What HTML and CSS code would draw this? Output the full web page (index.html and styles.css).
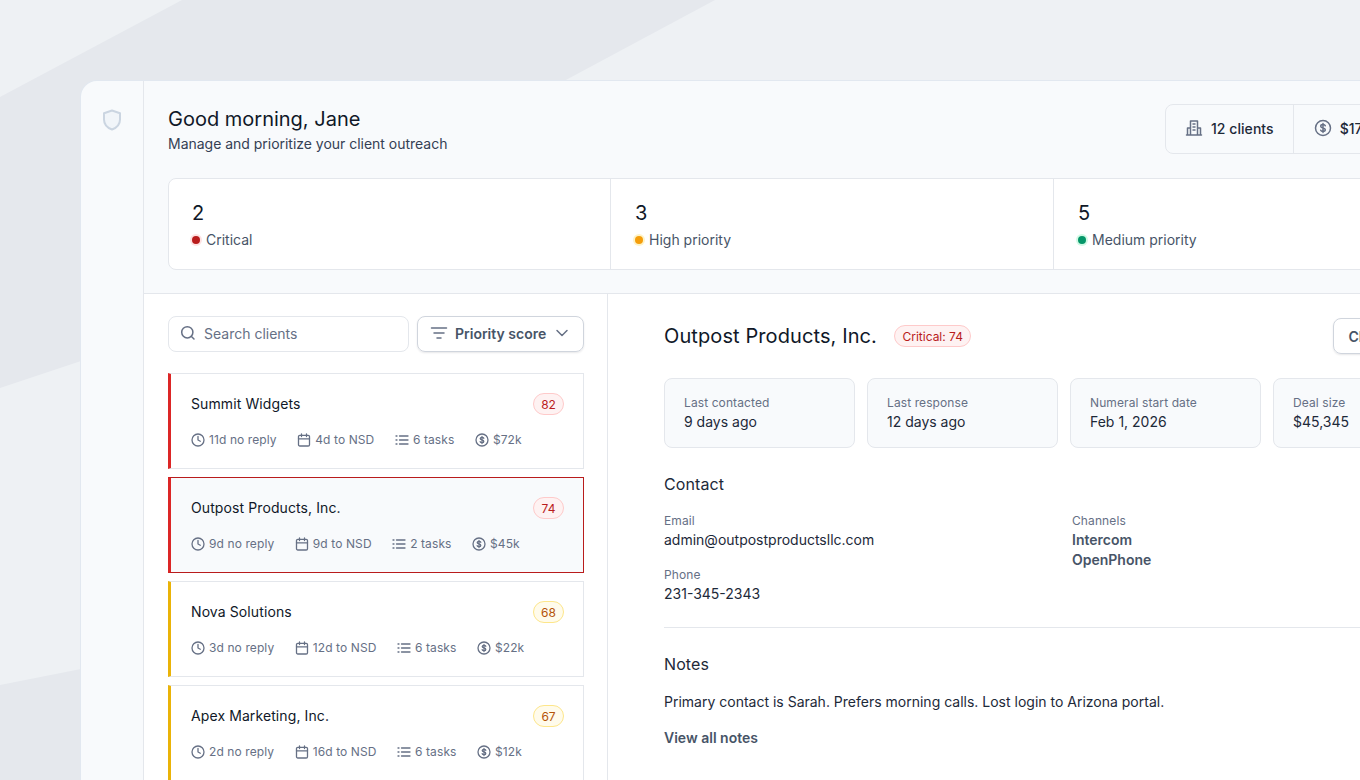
FILE: index.html
```html
<!DOCTYPE html>
<html>

<head>
    <link rel="stylesheet" href="styles.css">
</head>

<body>

    <svg class="backdrop" width="1360" height="780" viewBox="0 0 1360 780">
        <polygon points="182,0 715,0 564,81 81,361 0,388 0,97" />
        <polygon points="0,685 81,669 81,780 0,780" />
    </svg>

    <div class="app">
        <div class="sidebar">
            <svg class="shield" width="24" height="24" viewBox="0 0 24 24">
                <path d="M12 2.500l8 2.800v6.200c0 5-3.300 8.300-8 10-4.700-1.700-8-5-8-10V5.300z" />
            </svg>
        </div>

        <div class="main">
            <div class="top">
                <div class="top-row">
                    <div class="intro">
                        <h1 class="greeting">Good morning, Jane</h1>
                        <p class="subtitle">Manage and prioritize your client outreach</p>
                    </div>
                    <div class="totals">
                        <div class="total">
                            <svg class="icon-18" viewBox="0 0 18 18"><path d="M1.500 16h15M2.500 16V9h3M15.500 16V9h-3M5.500 16V2h7v14M8 5h2M8 8h2M8 11h2" /></svg>
                            12 clients
                        </div>
                        <div class="total">
                            <svg class="icon-18" viewBox="0 0 18 18"><circle cx="9" cy="9" r="7.500" /><path d="M11.300 6.800C11 6 10.100 5.500 9 5.500c-1.300 0-2.300.7-2.300 1.700 0 2.300 4.600 1.200 4.600 3.600 0 1-1 1.700-2.300 1.700-1.100 0-2-.5-2.300-1.300M9 4.500v9" /></svg>
                            $172k
                        </div>
                    </div>
                </div>

                <div class="stats">
                    <div class="stat">
                        <div class="stat-num">2</div>
                        <div class="stat-label"><span class="dot dot-red"></span>Critical</div>
                    </div>
                    <div class="stat">
                        <div class="stat-num">3</div>
                        <div class="stat-label"><span class="dot dot-orange"></span>High priority</div>
                    </div>
                    <div class="stat">
                        <div class="stat-num">5</div>
                        <div class="stat-label"><span class="dot dot-green"></span>Medium priority</div>
                    </div>
                </div>
            </div>

            <div class="split">
                <div class="list-panel">
                    <div class="tools">
                        <div class="search">
                            <svg class="icon-16" viewBox="0 0 16 16"><circle cx="7.300" cy="7.300" r="5.600" /><path d="M14 14l-2.800-2.800" /></svg>
                            Search clients
                        </div>
                        <div class="sort">
                            <svg class="icon-18" viewBox="0 0 18 18"><path d="M1.500 4h15M4 9h10M7 14h4" /></svg>
                            <span class="sort-text">Priority score</span>
                            <svg class="icon-18 chevron" viewBox="0 0 18 18"><path d="M4 6.500l5 5 5-5" /></svg>
                        </div>
                    </div>

                    <div class="client client-red">
                        <div class="client-head">
                            <span class="client-name">Summit Widgets</span>
                            <span class="score score-red">82</span>
                        </div>
                        <div class="client-meta">
                            <span class="meta"><svg class="icon-14" viewBox="0 0 14 14"><circle cx="7" cy="7" r="6" /><path d="M7 3.500V7l2.300 1.300" /></svg>11d no reply</span>
                            <span class="meta"><svg class="icon-14" viewBox="0 0 14 14"><rect x="1.500" y="2.300" width="11" height="10.700" rx="1.300" /><path d="M1.500 5.800h11M4.500 1v2.500M9.500 1v2.500" /></svg>4d to NSD</span>
                            <span class="meta"><svg class="icon-14" viewBox="0 0 14 14"><path d="M4.500 3h8.500M4.500 7h8.500M4.500 11h8.500M1 3h1M1 7h1M1 11h1" /></svg>6 tasks</span>
                            <span class="meta"><svg class="icon-14" viewBox="0 0 14 14"><circle cx="7" cy="7" r="6" /><path d="M8.800 5.300C8.600 4.700 7.900 4.300 7 4.300c-1 0-1.800.5-1.800 1.300 0 1.800 3.600.9 3.600 2.800 0 .8-.8 1.300-1.800 1.300-.9 0-1.600-.4-1.800-1M7 3.500v7" /></svg>$72k</span>
                        </div>
                    </div>

                    <div class="client client-red client-active">
                        <div class="client-head">
                            <span class="client-name">Outpost Products, Inc.</span>
                            <span class="score score-red">74</span>
                        </div>
                        <div class="client-meta">
                            <span class="meta"><svg class="icon-14" viewBox="0 0 14 14"><circle cx="7" cy="7" r="6" /><path d="M7 3.500V7l2.300 1.300" /></svg>9d no reply</span>
                            <span class="meta"><svg class="icon-14" viewBox="0 0 14 14"><rect x="1.500" y="2.300" width="11" height="10.700" rx="1.300" /><path d="M1.500 5.800h11M4.500 1v2.500M9.500 1v2.500" /></svg>9d to NSD</span>
                            <span class="meta"><svg class="icon-14" viewBox="0 0 14 14"><path d="M4.500 3h8.500M4.500 7h8.500M4.500 11h8.500M1 3h1M1 7h1M1 11h1" /></svg>2 tasks</span>
                            <span class="meta"><svg class="icon-14" viewBox="0 0 14 14"><circle cx="7" cy="7" r="6" /><path d="M8.800 5.300C8.600 4.700 7.900 4.300 7 4.300c-1 0-1.800.5-1.800 1.300 0 1.800 3.600.9 3.600 2.800 0 .8-.8 1.300-1.800 1.300-.9 0-1.600-.4-1.800-1M7 3.500v7" /></svg>$45k</span>
                        </div>
                    </div>

                    <div class="client client-amber">
                        <div class="client-head">
                            <span class="client-name">Nova Solutions</span>
                            <span class="score score-amber">68</span>
                        </div>
                        <div class="client-meta">
                            <span class="meta"><svg class="icon-14" viewBox="0 0 14 14"><circle cx="7" cy="7" r="6" /><path d="M7 3.500V7l2.300 1.300" /></svg>3d no reply</span>
                            <span class="meta"><svg class="icon-14" viewBox="0 0 14 14"><rect x="1.500" y="2.300" width="11" height="10.700" rx="1.300" /><path d="M1.500 5.800h11M4.500 1v2.500M9.500 1v2.500" /></svg>12d to NSD</span>
                            <span class="meta"><svg class="icon-14" viewBox="0 0 14 14"><path d="M4.500 3h8.500M4.500 7h8.500M4.500 11h8.500M1 3h1M1 7h1M1 11h1" /></svg>6 tasks</span>
                            <span class="meta"><svg class="icon-14" viewBox="0 0 14 14"><circle cx="7" cy="7" r="6" /><path d="M8.800 5.300C8.600 4.700 7.900 4.300 7 4.300c-1 0-1.800.5-1.800 1.300 0 1.800 3.600.9 3.600 2.800 0 .8-.8 1.300-1.800 1.300-.9 0-1.600-.4-1.800-1M7 3.500v7" /></svg>$22k</span>
                        </div>
                    </div>

                    <div class="client client-amber">
                        <div class="client-head">
                            <span class="client-name">Apex Marketing, Inc.</span>
                            <span class="score score-amber">67</span>
                        </div>
                        <div class="client-meta">
                            <span class="meta"><svg class="icon-14" viewBox="0 0 14 14"><circle cx="7" cy="7" r="6" /><path d="M7 3.500V7l2.300 1.300" /></svg>2d no reply</span>
                            <span class="meta"><svg class="icon-14" viewBox="0 0 14 14"><rect x="1.500" y="2.300" width="11" height="10.700" rx="1.300" /><path d="M1.500 5.800h11M4.500 1v2.500M9.500 1v2.500" /></svg>16d to NSD</span>
                            <span class="meta"><svg class="icon-14" viewBox="0 0 14 14"><path d="M4.500 3h8.500M4.500 7h8.500M4.500 11h8.500M1 3h1M1 7h1M1 11h1" /></svg>6 tasks</span>
                            <span class="meta"><svg class="icon-14" viewBox="0 0 14 14"><circle cx="7" cy="7" r="6" /><path d="M8.800 5.300C8.600 4.700 7.900 4.300 7 4.300c-1 0-1.800.5-1.800 1.300 0 1.800 3.600.9 3.600 2.800 0 .8-.8 1.300-1.800 1.300-.9 0-1.600-.4-1.800-1M7 3.500v7" /></svg>$12k</span>
                        </div>
                    </div>
                </div>

                <div class="detail">
                    <div class="detail-head">
                        <h2 class="detail-title">Outpost Products, Inc.</h2>
                        <span class="tag">Critical: 74</span>
                        <div class="detail-btn">Close</div>
                    </div>

                    <div class="facts">
                        <div class="fact"><div class="fact-label">Last contacted</div><div class="fact-value">9 days ago</div></div>
                        <div class="fact"><div class="fact-label">Last response</div><div class="fact-value">12 days ago</div></div>
                        <div class="fact"><div class="fact-label">Numeral start date</div><div class="fact-value">Feb 1, 2026</div></div>
                        <div class="fact"><div class="fact-label">Deal size</div><div class="fact-value">$45,345</div></div>
                    </div>

                    <h3 class="section-title">Contact</h3>
                    <div class="contact">
                        <div>
                            <div class="field">
                                <div class="field-label">Email</div>
                                <div class="field-value">admin@outpostproductsllc.com</div>
                            </div>
                            <div class="field">
                                <div class="field-label">Phone</div>
                                <div class="field-value">231-345-2343</div>
                            </div>
                        </div>
                        <div class="field">
                            <div class="field-label">Channels</div>
                            <div class="field-strong">Intercom</div>
                            <div class="field-strong">OpenPhone</div>
                        </div>
                    </div>

                    <div class="rule"></div>

                    <h3 class="section-title">Notes</h3>
                    <p class="note">Primary contact is Sarah. Prefers morning calls. Lost login to Arizona portal.</p>
                    <div class="more">View all notes</div>
                </div>
            </div>
        </div>
    </div>

</body>

</html>
```

FILE: styles.css
```css
html, body {
    height: 100%;
}

body {
    margin: 0;
    background-color: #eef1f4;
    font-family: Inter, "Liberation Sans", sans-serif;
    color: #101828;
    overflow: hidden;
}

.backdrop {
    position: absolute;
    top: 0;
    left: 0;
}

.backdrop polygon {
    fill: #e5e8ed;
    stroke: none;
}

h1, h2, h3, p {
    margin: 0;
    font-weight: 400;
}

svg {
    flex: none;
    fill: none;
    stroke: #667085;
    stroke-width: 1.5;
    stroke-linecap: round;
    stroke-linejoin: round;
}

.shield {
    fill: #f1f5f9;
    stroke: #cbd5e1;
    stroke-width: 2;
}

.icon-14 { width: 14px; height: 14px; stroke-width: 1.3; }
.icon-16 { width: 16px; height: 16px; }
.icon-18 { width: 18px; height: 18px; }

.app {
    position: absolute;
    top: 81px;
    left: 81px;
    width: 1279px;
    height: 699px;
    display: flex;
    background-color: #f8fafc;
    border-radius: 16px 0 0 0;
    box-shadow: 0 0 0 1px #e2e8f0;
    overflow: hidden;
}

.sidebar {
    width: 63px;
    flex: none;
    box-sizing: border-box;
    padding-top: 27px;
    display: flex;
    justify-content: center;
    align-items: flex-start;
    border-right: 1px solid #e4e7ec;
}

.main {
    width: 1375px;
    flex: none;
    display: flex;
    flex-direction: column;
}

.top {
    height: 213px;
    flex: none;
    box-sizing: border-box;
    padding: 24px 24px 0;
    border-bottom: 1px solid #e4e7ec;
}

.top-row {
    display: flex;
    height: 73px;
}

.intro {
    width: 997px;
    flex: none;
}

.greeting {
    font-size: 20px;
    line-height: 28px;
}

.subtitle {
    font-size: 14px;
    line-height: 20px;
    font-weight: 400;
    letter-spacing: -0.02px;
    color: #344054;
    margin-top: 1px;
}

.totals {
    display: flex;
    height: 50px;
    box-sizing: border-box;
    margin-top: -1px;
    border: 1px solid #e4e7ec;
    border-radius: 8px;
}

.total {
    display: flex;
    align-items: center;
    gap: 8px;
    padding: 0 19px 2px;
    font-size: 14px;
    font-weight: 500;
    letter-spacing: 0.05px;
    color: #1d2939;
}

.total + .total {
    padding-left: 20px;
    border-left: 1px solid #e4e7ec;
}

.stats {
    display: grid;
    grid-template-columns: 441px 443px 1fr;
    height: 92px;
    box-sizing: border-box;
    background-color: #ffffff;
    border: 1px solid #e4e7ec;
    border-radius: 8px;
}

.stat {
    padding: 21px 23px 0;
}

.stat + .stat {
    padding-left: 24px;
    border-left: 1px solid #e4e7ec;
}

.stat-num {
    font-size: 20px;
    line-height: 26px;
}

.stat-label {
    display: flex;
    align-items: center;
    gap: 6px;
    font-size: 14px;
    line-height: 20px;
    color: #475467;
    margin-top: 4px;
}

.dot {
    width: 8px;
    height: 8px;
    border-radius: 50%;
}

.dot-red { background-color: #b91c1c; box-shadow: 0 0 0 2px #fee2e2; }
.dot-orange { background-color: #f59e0b; box-shadow: 0 0 0 2px #fef3c7; }
.dot-green { background-color: #059669; box-shadow: 0 0 0 2px #d1fae5; }

.split {
    flex: 1;
    display: flex;
    background-color: #ffffff;
}

.list-panel {
    width: 464px;
    flex: none;
    box-sizing: border-box;
    padding: 22px 23px 0 24px;
    border-right: 1px solid #e4e7ec;
}

.tools {
    display: flex;
    gap: 8px;
    margin-bottom: 21px;
}

.search {
    flex: 1;
    height: 36px;
    box-sizing: border-box;
    display: flex;
    align-items: center;
    gap: 8px;
    padding: 0 11px 2px;
    font-size: 14px;
    color: #667085;
    border: 1px solid #e4e7ec;
    border-radius: 8px;
}

.sort {
    width: 167px;
    height: 36px;
    flex: none;
    box-sizing: border-box;
    display: flex;
    align-items: center;
    gap: 7px;
    padding: 0 12px 2px;
    font-size: 14px;
    font-weight: 600;
    color: #475467;
    border: 1px solid #d0d5dd;
    border-radius: 8px;
    box-shadow: 0 1px 2px rgba(16, 24, 40, 0.1);
}

.sort-text {
    white-space: nowrap;
}

.chevron {
    margin-left: auto;
}

.client {
    height: 96px;
    box-sizing: border-box;
    margin-bottom: 8px;
    padding: 19px 19px 0 20px;
    border: 1px solid #e4e7ec;
    border-left: 3px solid;
}

.client-red { border-left-color: #dc2626; }
.client-amber { border-left-color: #eab308; }

.client-active {
    background-color: #f8fafc;
    border-color: #b91c1c;
    border-left-color: #dc2626;
}

.client-head {
    display: flex;
    justify-content: space-between;
    align-items: center;
    height: 22px;
}

.client-name {
    font-size: 14px;
    font-weight: 400;
    letter-spacing: 0.1px;
    color: #101828;
    margin-top: -2px;
}

.score {
    height: 22px;
    min-width: 31px;
    box-sizing: border-box;
    display: flex;
    align-items: center;
    justify-content: center;
    padding: 0 6px;
    font-size: 12px;
    border-radius: 11px;
}

.score-red { color: #b91c1c; background-color: #fef2f2; border: 1px solid #fecaca; }
.score-amber { color: #b45309; background-color: #fffbeb; border: 1px solid #fde68a; }

.client-meta {
    display: flex;
    gap: 20.5px;
    margin-top: 17px;
}

.meta {
    display: flex;
    align-items: center;
    gap: 4px;
    font-size: 12px;
    line-height: 16px;
    letter-spacing: 0.1px;
    color: #667085;
}

.detail {
    flex: 1;
    min-width: 0;
    padding: 23px 56px 0;
}

.detail-head {
    display: flex;
    align-items: center;
    gap: 17px;
    height: 38px;
    margin-bottom: 23px;
}

.detail-title {
    font-size: 20px;
    letter-spacing: 0.1px;
    white-space: nowrap;
}

.tag {
    height: 22px;
    box-sizing: border-box;
    display: flex;
    align-items: center;
    padding: 0 7.5px;
    font-size: 12px;
    color: #b91c1c;
    background-color: #fef2f2;
    border: 1px solid #fecaca;
    border-radius: 11px;
}

.detail-btn {
    margin-left: 345px;
    height: 36px;
    flex: none;
    box-sizing: border-box;
    display: flex;
    align-items: center;
    padding: 0 14px;
    font-size: 14px;
    font-weight: 600;
    color: #475467;
    border: 1px solid #d0d5dd;
    border-radius: 8px;
    box-shadow: 0 1px 2px rgba(16, 24, 40, 0.1);
}

.facts {
    display: flex;
    gap: 12px;
    margin-bottom: 25px;
}

.fact {
    width: 191px;
    height: 70px;
    flex: none;
    box-sizing: border-box;
    padding: 16px 19px 0;
    background-color: #f8fafc;
    border: 1px solid #e4e7ec;
    border-radius: 8px;
}

.fact-label {
    font-size: 12px;
    line-height: 16px;
    letter-spacing: 0.1px;
    color: #667085;
}

.fact-value {
    font-size: 14px;
    line-height: 20px;
    color: #1d2939;
    margin-top: 1px;
}

.section-title {
    font-size: 16px;
    line-height: 22px;
    letter-spacing: 0.1px;
    color: #1d2939;
}

.contact {
    display: grid;
    grid-template-columns: 408px 1fr;
    margin-top: 18px;
}

.field {
    margin-bottom: 17px;
}

.field-label {
    font-size: 12px;
    line-height: 16px;
    letter-spacing: 0.1px;
    color: #667085;
}

.field-value {
    font-size: 14px;
    line-height: 20px;
    color: #1d2939;
    margin-top: 1px;
}

.field-strong {
    font-size: 14px;
    line-height: 20px;
    font-weight: 600;
    color: #475467;
}

.field-label + .field-strong {
    margin-top: 1px;
}

.rule {
    height: 1px;
    background-color: #e4e7ec;
    margin: 6px 0 25px;
}

.note {
    font-size: 14px;
    line-height: 20px;
    font-weight: 400;
    color: #1d2939;
    margin-top: 17px;
}

.more {
    font-size: 14px;
    line-height: 20px;
    font-weight: 600;
    color: #475467;
    margin-top: 16px;
}
```
